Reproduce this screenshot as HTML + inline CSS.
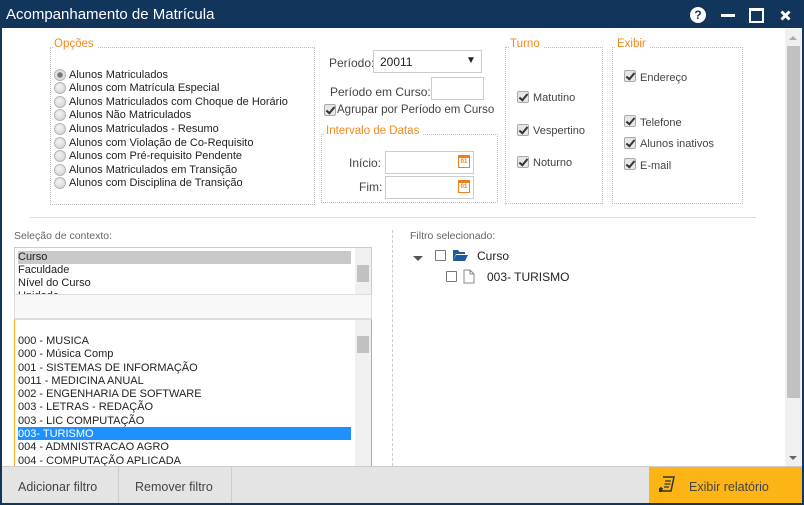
<!DOCTYPE html>
<html><head><meta charset="utf-8"><style>
*{margin:0;padding:0;box-sizing:border-box}
body{width:804px;height:505px;overflow:hidden;background:#fff;font-family:"Liberation Sans",sans-serif;font-size:11px;color:#222;position:relative}
.a{position:absolute;white-space:nowrap}
.fs{position:absolute;border:1px dotted #bbb}
.lg{position:absolute;color:#f08a1c;font-size:11.5px;background:#fff;padding:0 3px 0 1px}
.rad{position:absolute;width:12px;height:12px;border-radius:50%;background:radial-gradient(circle at 40% 35%,#f4f4f4,#cfcfcf);border:1px solid #b5b5b5}
.cb{position:absolute;width:12px;height:12px;border:1px solid #aaa;border-radius:2px;background:#e6e6e6}
.cb:after{content:"";position:absolute;left:3px;top:0px;width:3px;height:7px;border:solid #333;border-width:0 2px 2px 0;transform:rotate(40deg)}
.inp{position:absolute;border:1px solid #ccc;background:#fff}
.cal{position:absolute;width:12px;height:13px;border:1.5px solid #f07f1a;border-top-width:3px;font-size:6px;color:#f07f1a;text-align:center;line-height:8px;font-weight:bold}
</style></head><body>
<div class="a" style="left:0;top:0;width:804px;height:28px;background:#12355b"></div>
<div class="a" style="left:0;top:0;width:2px;height:505px;background:#12355b"></div>
<div class="a" style="left:802px;top:0;width:2px;height:505px;background:#12355b"></div>
<div class="a" style="left:0;top:503px;width:804px;height:2px;background:#12355b"></div>
<div class="a" style="left:6px;top:6px;color:#fff;font-size:15px">Acompanhamento de Matrícula</div>
<div class="a" style="left:690px;top:7px;width:16px;height:16px;border-radius:50%;background:#fff;color:#12355b;font-weight:bold;font-size:12px;text-align:center;line-height:16px">?</div>
<div class="a" style="left:721px;top:14px;width:14px;height:3px;background:#fff"></div>
<div class="a" style="left:749px;top:8px;width:15px;height:15px;border:2px solid #fff;border-top-width:3px"></div>
<svg class="a" style="left:780px;top:10px" width="11" height="11"><path d="M1.5 1.5l8 8M9.5 1.5l-8 8" stroke="#fff" stroke-width="3"/></svg>
<div class="a" style="left:785px;top:29px;width:17px;height:437px;background:#f0f0f0"></div>
<div class="a" style="left:787px;top:46px;width:13px;height:352px;background:#c1c1c1"></div>
<div class="a" style="left:789px;top:36px;width:0;height:0;border:4px solid transparent;border-bottom-color:#aaa;border-top:0"></div>
<div class="a" style="left:789px;top:456px;width:0;height:0;border:4px solid transparent;border-top-color:#666;border-bottom:0"></div>
<div class="fs" style="left:50px;top:47px;width:265px;height:158px"></div>
<div class="lg" style="left:53px;top:38px">Opções</div>
<div class="rad" style="left:54px;top:69px;background:radial-gradient(circle,#777 0 2.5px,#e0e0e0 3px)"></div><div class="a" style="left:69px;top:69px">Alunos Matriculados</div>
<div class="rad" style="left:54px;top:82px"></div><div class="a" style="left:69px;top:82px">Alunos com Matrícula Especial</div>
<div class="rad" style="left:54px;top:96px"></div><div class="a" style="left:69px;top:96px">Alunos Matriculados com Choque de Horário</div>
<div class="rad" style="left:54px;top:109px"></div><div class="a" style="left:69px;top:109px">Alunos Não Matriculados</div>
<div class="rad" style="left:54px;top:123px"></div><div class="a" style="left:69px;top:123px">Alunos Matriculados - Resumo</div>
<div class="rad" style="left:54px;top:137px"></div><div class="a" style="left:69px;top:137px">Alunos com Violação de Co-Requisito</div>
<div class="rad" style="left:54px;top:150px"></div><div class="a" style="left:69px;top:150px">Alunos com Pré-requisito Pendente</div>
<div class="rad" style="left:54px;top:164px"></div><div class="a" style="left:69px;top:164px">Alunos Matriculados em Transição</div>
<div class="rad" style="left:54px;top:177px"></div><div class="a" style="left:69px;top:177px">Alunos com Disciplina de Transição</div>
<div class="a" style="left:329px;top:56px;font-size:12px;color:#444">Período:</div>
<div class="inp" style="left:373px;top:50px;width:109px;height:23px"></div>
<div class="a" style="left:380px;top:55px;font-size:12px">20011</div>
<div class="a" style="left:466px;top:55px;font-size:10px">▼</div>
<div class="a" style="left:330px;top:85px;font-size:12px;color:#444">Período em Curso:</div>
<div class="inp" style="left:431px;top:77px;width:53px;height:23px"></div>
<div class="cb" style="left:324px;top:104px"></div>
<div class="a" style="left:337px;top:104px;font-size:11.5px;color:#444">Agrupar por Período em Curso</div>
<div class="fs" style="left:321px;top:134px;width:177px;height:69px"></div>
<div class="lg" style="left:325px;top:125px">Intervalo de Datas</div>
<div class="a" style="left:349px;top:156px;font-size:12px;color:#444">Início:</div>
<div class="inp" style="left:385px;top:151px;width:89px;height:23px"></div>
<div class="a" style="left:359px;top:180px;font-size:12px;color:#444">Fim:</div>
<div class="inp" style="left:385px;top:176px;width:89px;height:23px"></div>
<div class="cal" style="left:458px;top:155px">01</div>
<div class="cal" style="left:458px;top:180px">01</div>
<div class="fs" style="left:505px;top:47px;width:98px;height:157px"></div>
<div class="lg" style="left:509px;top:38px">Turno</div>
<div class="cb" style="left:517px;top:91px"></div><div class="a" style="left:533px;top:92px;color:#444">Matutino</div>
<div class="cb" style="left:517px;top:124px"></div><div class="a" style="left:533px;top:125px;color:#444">Vespertino</div>
<div class="cb" style="left:517px;top:156px"></div><div class="a" style="left:533px;top:157px;color:#444">Noturno</div>
<div class="fs" style="left:612px;top:47px;width:131px;height:157px"></div>
<div class="lg" style="left:616px;top:38px">Exibir</div>
<div class="cb" style="left:624px;top:70px"></div><div class="a" style="left:640px;top:72px;color:#444">Endereço</div>
<div class="cb" style="left:624px;top:115px"></div><div class="a" style="left:640px;top:117px;color:#444">Telefone</div>
<div class="cb" style="left:624px;top:137px"></div><div class="a" style="left:640px;top:138px;color:#444">Alunos inativos</div>
<div class="cb" style="left:624px;top:158px"></div><div class="a" style="left:640px;top:160px;color:#444">E-mail</div>
<div class="a" style="left:30px;top:217px;width:726px;height:1px;background:#ddd"></div>
<div class="a" style="left:14px;top:230px;color:#666;font-size:10.5px">Seleção de contexto:</div>
<div class="a" style="left:14px;top:247px;width:358px;height:48px;border:1px solid #ccc;overflow:hidden">
 <div class="a" style="left:3px;top:3px;width:333px;height:13px;background:#c8c8c8"></div>
 <div class="a" style="left:340px;top:0;width:16px;height:48px;background:#f0f0f0"></div>
 <div class="a" style="left:342px;top:17px;width:12px;height:17px;background:#c1c1c1"></div>
 <div class="a" style="left:3px;top:3px;line-height:13px">Curso<br>Faculdade<br>Nível do Curso<br>Unidade</div>
</div>
<div class="a" style="left:14px;top:294px;width:358px;height:25px;border:1px solid #ddd;background:#f8f8f8"></div>
<div class="a" style="left:14px;top:319px;width:358px;height:148px;border-left:1px solid #f5a623;border-right:1px solid #f5a623;border-top:1px solid #ddd;overflow:hidden">
 <div class="a" style="left:340px;top:0;width:16px;height:148px;background:#f0f0f0"></div>
 <div class="a" style="left:342px;top:16px;width:12px;height:17px;background:#c1c1c1"></div>
 <div class="a" style="left:3px;top:107px;width:333px;height:13px;background:#1e90ff"></div>
 <div class="a" style="left:3px;top:15px;line-height:13.3px">000 - MUSICA<br>000 - Música Comp<br>001 - SISTEMAS DE INFORMAÇÃO<br>0011 - MEDICINA ANUAL<br>002 - ENGENHARIA DE SOFTWARE<br>003 - LETRAS - REDAÇÃO<br>003 - LIC COMPUTAÇÃO<br><span style="color:#fff">003- TURISMO</span><br>004 - ADMNISTRACAO AGRO<br>004 - COMPUTAÇÃO APLICADA</div>
</div>
<div class="a" style="left:392px;top:230px;width:0;height:236px;border-left:1px dashed #ccc"></div>
<div class="a" style="left:410px;top:230px;color:#666;font-size:10.5px">Filtro selecionado:</div>
<div class="a" style="left:413px;top:256px;width:0;height:0;border:5px solid transparent;border-top-color:#555;border-bottom:0"></div>
<div class="a" style="left:435px;top:250px;width:11px;height:11px;border:1.5px solid #777;border-radius:1px"></div>
<svg class="a" style="left:452px;top:249px" width="17" height="13"><path d="M1 1h5l1.5 2H13v2H4L1 12z" fill="#1f5a9c"/><path d="M4 6h12l-3 6H1z" fill="#1f5a9c"/></svg>
<div class="a" style="left:477px;top:249px;font-size:12px">Curso</div>
<div class="a" style="left:446px;top:271px;width:11px;height:11px;border:1.5px solid #777;border-radius:1px"></div>
<svg class="a" style="left:463px;top:269px" width="12" height="15"><path d="M1 1h6l4 4v9H1z M7 1v4h4" fill="none" stroke="#888"/></svg>
<div class="a" style="left:487px;top:270px;font-size:12px">003- TURISMO</div>
<div class="a" style="left:2px;top:466px;width:800px;height:37px;background:#e4e4e4;border-top:1px solid #ccc"></div>
<div class="a" style="left:118px;top:467px;width:1px;height:36px;background:#ccc"></div>
<div class="a" style="left:231px;top:467px;width:1px;height:36px;background:#ccc"></div>
<div class="a" style="left:18px;top:480px;font-size:12.5px;color:#444">Adicionar filtro</div>
<div class="a" style="left:135px;top:480px;font-size:12.5px;color:#444">Remover filtro</div>
<div class="a" style="left:649px;top:467px;width:153px;height:36px;background:#fdb515"></div>
<svg class="a" style="left:658px;top:475px" width="20" height="20"><path d="M5 2h11l-3 14H2l1-4" fill="none" stroke="#333" stroke-width="1.5"/><path d="M7 6h6M6.5 9h6M6 12h5" stroke="#333" stroke-width="1.2"/><path d="M1 13h4l-1 4H1z" fill="#333"/></svg>
<div class="a" style="left:689px;top:480px;font-size:12.5px;color:#444">Exibir relatório</div>
</body></html>
